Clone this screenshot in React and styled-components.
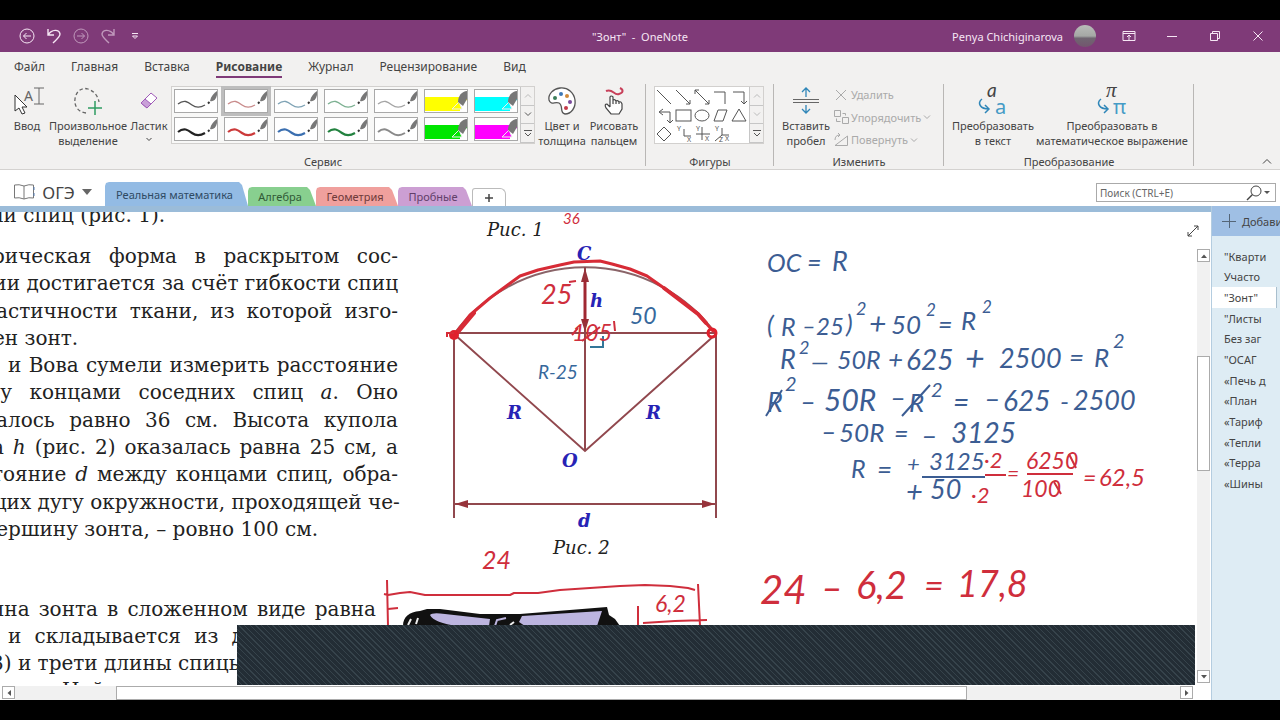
import React, { useState } from "react";
import styled, { createGlobalStyle, css } from "styled-components";

const ui = '"Noto Sans", "Open Sans", sans-serif';
const serif = '"DejaVu Serif", "Liberation Serif", serif';

const GlobalStyle = createGlobalStyle`
  * { box-sizing: border-box; }
  body { margin: 0; background: #000; font-family: ${ui}; font-size: 12px; color: #444; }
  button, input { font: inherit; color: inherit; }
`;

// shell
const Screen = styled.div`
  display: flex;
  flex-direction: column;
  height: 100vh;
  padding: 20px 0;
  background: #000;
  overflow: hidden;
`;
const PlainButton = styled.button`
  display: flex;
  align-items: center;
  justify-content: center;
  padding: 0;
  border: 0;
  background: none;
  cursor: pointer;
`;

// title bar
const TitleBar = styled.header`
  display: grid;
  flex: none;
  grid-template-columns: 1fr auto 1fr;
  align-items: center;
  height: 32px;
  background: #7f3a78;
  color: #f6e6f4;
  font-size: 11px;
`;
const QuickAccess = styled.div`
  display: flex;
  gap: 7px;
  padding-left: 17px;
`;
const QuickButton = styled(PlainButton)`
  width: 20px;
  height: 20px;
  opacity: ${({ $dim }) => ($dim ? 0.55 : 1)};
`;
const WindowTitle = styled.h1`
  margin: 0;
  font-size: 11px;
  font-weight: 400;
  white-space: pre;
`;
const WindowTools = styled.div`
  display: flex;
  align-items: center;
  justify-content: flex-end;
  padding-right: 10px;
`;
const UserName = styled.span`
  margin-right: 11px;
`;
const Avatar = styled.span`
  width: 22px;
  height: 22px;
  margin-right: 21px;
  border-radius: 50%;
  background: linear-gradient(#b9bcb9 0%, #a5a8a5 50%, #6f6671 60%, #74556f 100%);
`;
const WindowButton = styled(PlainButton)`
  width: 24px;
  height: 24px;
  margin-left: ${({ $first }) => ($first ? "0" : "19px")};
`;

// ribbon
const Ribbon = styled.section`
  flex: none;
  height: 118px;
  background: #f2f1f0;
  border-bottom: 1px solid #d4d2d0;
`;
const RibbonTabs = styled.nav`
  display: flex;
  gap: 26px;
  height: 32px;
  padding: 4px 14px 0;
`;
const RibbonTab = styled(PlainButton)`
  height: 20px;
  ${({ $active }) =>
    $active &&
    css`
      font-weight: 700;
      box-shadow: 0 2px 0 #7f3a78;
    `}
`;
const Groups = styled.div`
  display: flex;
  height: 84px;
`;
const Group = styled.div`
  display: flex;
  flex-direction: column;
  justify-content: space-between;
  flex: 0 0 ${({ $width }) => $width}px;
  min-width: 0;
  background: linear-gradient(#b9b7b5, #b9b7b5) right top / 1px 82px no-repeat;
`;
const GroupItems = styled.div`
  display: flex;
  gap: 2px;
  padding: 2px 0 0 ${({ $start = 8 }) => $start}px;
`;
const GroupLabel = styled.span`
  line-height: 13px;
  font-size: 11px;
  text-align: center;
`;
const ToolButton = styled(PlainButton)`
  flex: 0 0 ${({ $width }) => $width}px;
  flex-direction: column;
  justify-content: flex-start;
  line-height: 15px;
  font-size: 11px;
  white-space: nowrap;
  svg { margin-bottom: 2px; }
`;
const Gallery = styled.div`
  display: flex;
  height: 58px;
  border: 1px solid #d2d0ce;
  background: #fff;
`;
const PenGrid = styled.div`
  display: grid;
  grid-template-columns: repeat(7, 44px);
  gap: 4px 6px;
  padding: 2px;
  background: #f8f8f7;
`;
const PenCell = styled(PlainButton)`
  height: 24px;
  border: 1px solid #a9a9a9;
  background: #fff;
  outline: ${({ $active }) => ($active ? "3px solid #bdbdbd" : "none")};
`;
const GalleryScroll = styled.div`
  display: grid;
  grid-template-rows: repeat(3, 1fr);
  width: 14px;
  border-left: 1px solid #c6c6c6;
`;
const ScrollStep = styled(PlainButton)`
  background: #f2f1f0;
  border-bottom: 1px solid #c6c6c6;
  color: ${({ $dim }) => ($dim ? "#bbb" : "#555")};
`;
const EditList = styled.div`
  display: flex;
  flex-direction: column;
  justify-content: space-between;
  height: 62px;
  color: #aaa;
`;
const EditButton = styled(PlainButton)`
  gap: 2px;
  justify-content: flex-start;
  height: 17px;
  font-size: 11px;
  white-space: nowrap;
`;
const Collapse = styled(PlainButton)`
  align-self: flex-end;
  width: 20px;
  height: 14px;
  margin: 0 3px 0 auto;
`;

// notebook bar
const NotebookBar = styled.div`
  display: flex;
  flex: none;
  align-items: flex-end;
  height: 36px;
  background: #fff;
`;
const Notebook = styled(PlainButton)`
  gap: 7px;
  width: 105px;
  height: 28px;
  font-size: 17px;
`;
const SectionTab = styled(PlainButton)`
  width: ${({ $width }) => $width}px;
  height: ${({ $active }) => ($active ? 24 : 19)}px;
  padding-right: 4px;
  background: ${({ $color }) => $color};
  color: ${({ $ink }) => $ink};
  font-size: 11px;
  clip-path: polygon(0 4px, 1px 1px, 4px 0, calc(100% - 9px) 0, calc(100% - 6px) 3px, 100% 100%, 0 100%);
`;
const NewSection = styled(PlainButton)`
  width: 34px;
  height: 18px;
  border: 1px solid #bbb;
  border-bottom: 0;
  border-radius: 3px 6px 0 0;
`;
const SearchBox = styled.label`
  display: flex;
  align-items: center;
  width: 180px;
  height: 19px;
  margin: 0 4px 4px auto;
  padding: 0 4px 0 3px;
  border: 1px solid #aaa;
  input {
    flex: 1;
    min-width: 0;
    padding: 0;
    border: 0;
    outline: 0;
    font-size: 10px;
  }
  input::placeholder { color: #666; opacity: 1; }
`;

// work area
const Work = styled.main`
  display: flex;
  flex: 1;
  min-height: 0;
  background: #fff;
`;
const Editor = styled.div`
  display: flex;
  flex-direction: column;
  flex: 1;
  min-width: 0;
  border-top: 6px solid #9bbcd9;
`;
const EditorRow = styled.div`
  display: flex;
  flex: 1;
  min-height: 0;
`;
const Canvas = styled.article`
  position: relative;
  flex: 1;
  min-width: 0;
  overflow: hidden;
  color: #222;
`;
const Ink = styled.svg`
  position: absolute;
  left: 0;
  top: 0;
`;
const Passage = styled.div`
  display: flex;
  flex-direction: column;
  justify-content: space-between;
  width: 398px;
  height: ${({ $height }) => $height}px;
  margin-top: ${({ $top }) => $top}px;
  font-family: ${serif};
  font-size: 20px;
  line-height: 27px;
`;
const Line = styled.p`
  margin: 0 ${({ $right = 0 }) => $right}px 0 ${({ $left = 0 }) => $left}px;
  white-space: nowrap;
  text-align-last: ${({ $loose }) => ($loose ? "left" : "justify")};
`;
const Cover = styled.div`
  position: absolute;
  left: 237px;
  right: 1px;
  bottom: 0;
  height: 60px;
  background: repeating-linear-gradient(45deg, #232d35 0 3px, #36434b 3px 4px);
`;

const VScroll = styled.div`
  display: flex;
  flex-direction: column;
  align-items: center;
  width: 15px;
  padding-bottom: 2px;
`;
const Expand = styled(PlainButton)`
  position: relative;
  width: 16px;
  height: 37px;
  margin-right: 22px;
`;
const Track = styled.div`
  display: flex;
  flex: 1;
  background: #f1f1f1;
  ${({ $vertical }) =>
    $vertical ? "flex-direction: column; width: 13px; padding-top: 94px;" : "height: 14px; padding-left: 101px;"}
`;
const Thumb = styled.div`
  flex: 0 0 ${({ $size }) => $size};
  border: 1px solid #ababab;
  background: #fff;
`;
const ArrowButton = styled(PlainButton)`
  width: 13px;
  height: 13px;
  border: 1px solid #ababab;
  background: #fff;
`;
const HScroll = styled.div`
  display: flex;
  align-items: center;
  height: 15px;
  padding: 0 18px 0 2px;
`;

// page list
const Pages = styled.aside`
  width: 69px;
  overflow: hidden;
  background: #deecf4;
  border-left: 1px solid #b4cde0;
`;
const AddPage = styled(PlainButton)`
  justify-content: flex-start;
  gap: 6px;
  width: 100%;
  height: 30px;
  padding-left: 10px;
  background: #9fbfe4;
  font-size: 11px;
  white-space: nowrap;
  svg { flex: none; }
`;
const PageList = styled.div`
  display: grid;
  grid-template-rows: repeat(12, 1fr);
  height: 248px;
  margin-top: 10px;
`;
const PageItem = styled(PlainButton)`
  justify-content: flex-start;
  margin-right: 4px;
  padding-left: 12px;
  font-size: 11px;
  white-space: nowrap;
  ${({ $active }) => $active && "background: #fff; box-shadow: 1px 0 0 #a9bfce;"}
`;

function Icon({ w = 16, h = 16, children, ...rest }) {
  return (
    <svg width={w} height={h} viewBox={`0 0 ${w} ${h}`} fill="none" stroke="currentColor" overflow="visible" aria-hidden="true" {...rest}>
      {children}
    </svg>
  );
}

const Chevron = ({ up }) => (
  <Icon w={8} h={6}><path d={up ? "M1 4.5 4 1.5 7 4.5" : "M1 1.5 4 4.5 7 1.5"} /></Icon>
);
const More = () => (
  <Icon w={8} h={8}><path d="M0 1.5H8M1 4 4 7 7 4" /></Icon>
);
const Triangle = ({ turn = 0 }) => (
  <Icon w={8} h={8} stroke="none">
    <path d="M1 6 4 2.500 7 6Z" fill="#555" transform={`rotate(${turn} 4 4)`} />
  </Icon>
);

function PenIcon({ color, width }) {
  return (
    <Icon w={42} h={22}>
      <path d="M3 14C9 9 13 12 17 15S25 18 30 15" stroke={color} strokeWidth={width} />
      <path d="M33 13.500 34.500 12" stroke="#333" strokeWidth="2" />
      <path d="M35 11C36 6 39 3 42 1V5C41 10 38 12 35 11Z" fill="#777" stroke="none" />
    </Icon>
  );
}

function MarkerIcon({ color }) {
  return (
    <Icon w={42} h={22}>
      <path d="M0 7H42V21H0Z" fill={color} stroke="none" />
      <path d="M35 13 42 10V21H35Z" fill="#fff" stroke="none" />
      <path d="M27 19 34 12 37 19Z" stroke="#eee" fill={color} />
      <path d="M33 12C33 6 37 1 42 1V9L38 16Z" fill="#777" stroke="none" />
    </Icon>
  );
}

const pens = [
  ["#555", 1.3], ["#c98c8c", 1.3], ["#7fa3b5", 1.3], ["#7db192", 1.3], ["#a5a5a5", 1.3], "#ffff00", "#00ffff",
  ["#222", 2.2], ["#cc3a3a", 2.2], ["#3b6fb0", 2.2], ["#22823f", 2.2], ["#8a8a8a", 2], "#00e600", "#ff00ff",
];

const sections = [
  ["Реальная математика", 143, "#93bbe4", "#2f4a63"],
  ["Алгебра", 68, "#88cf8f", "#315a36"],
  ["Геометрия", 82, "#f0a09d", "#6e3a3a"],
  ["Пробные", 74, "#cc9fd3", "#62406a"],
];

const pages = [
  '"Кварти', "Участо", '"Зонт"', '"Листы', "Без заг", '"ОСАГ',
  "«Печь д", "«План", "«Тариф", "«Тепли", "«Терра", "«Шины",
];

const BLUE = "#3c5d93";
const RED = "#cf2e3c";

// handwriting on the canvas: text, x, baseline, size, colour
const notes = [
  ["OC", 767, 272, 25, BLUE], ["=", 807, 272, 25, BLUE], ["R", 832, 271, 27, BLUE],
  ["(", 767, 334, 26, BLUE], ["R", 781, 336, 25, BLUE], ["–", 802, 334, 24, BLUE], ["25", 816, 335, 24, BLUE],
  [")", 846, 333, 26, BLUE], ["2", 856, 315, 18, BLUE], ["+", 869, 334, 30, BLUE], ["50", 891, 334, 26, BLUE],
  ["2", 926, 316, 17, BLUE], ["=", 938, 334, 25, BLUE], ["R", 961, 330, 26, BLUE], ["2", 982, 313, 17, BLUE],
  ["R", 780, 369, 27, BLUE], ["2", 799, 354, 18, BLUE], ["—", 811, 370, 24, BLUE], ["50R", 837, 369, 25, BLUE],
  ["+", 888, 369, 26, BLUE], ["625", 906, 370, 28, BLUE], ["+", 965, 371, 34, BLUE], ["2500", 999, 368, 27, BLUE],
  ["=", 1069, 367, 26, BLUE], ["R", 1094, 367, 26, BLUE], ["2", 1113, 348, 20, BLUE],
  ["R", 767, 412, 27, BLUE], ["2", 785, 391, 20, BLUE], ["–", 800, 412, 28, BLUE], ["50R", 824, 411, 30, BLUE],
  ["–", 890, 408, 28, BLUE], ["R", 909, 412, 26, BLUE], ["2", 931, 397, 20, BLUE], ["=", 953, 412, 28, BLUE],
  ["–", 984, 409, 29, BLUE], ["625", 1003, 411, 28, BLUE], ["-", 1060, 411, 26, BLUE], ["2500", 1073, 410, 27, BLUE],
  ["–", 821, 441, 27, BLUE], ["50R", 839, 442, 26, BLUE], ["=", 894, 443, 25, BLUE], ["–", 921, 446, 29, BLUE],
  ["3125", 951, 443, 28, BLUE],
  ["R", 851, 478, 25, BLUE], ["=", 877, 479, 26, BLUE], ["+", 907, 472, 22, BLUE], ["3125", 929, 470, 24, BLUE],
  ["+", 906, 502, 29, BLUE], ["50", 930, 499, 27, BLUE],
  ["·2", 984, 468, 22, RED], ["=", 1007, 481, 21, RED], ["6250", 1026, 469, 23, RED], ["·2", 971, 503, 22, RED],
  ["100", 1021, 497, 23, RED], ["=", 1083, 486, 23, RED], ["62,5", 1099, 486, 24, RED],
  ["24", 760, 604, 40, RED], ["–", 821, 601, 38, RED], ["6,2", 856, 599, 38, RED], ["=", 924, 598, 34, RED],
  ["17,8", 957, 597, 36, RED],
  ["36", 563, 224, 15, RED], ["25", 541, 304, 27, RED], ["50", 630, 324, 23, "#36689c"], ["R-25", 538, 379, 19, "#36689c"],
  ["105", 572, 341, 23, RED], ["24", 482, 569, 25, RED], ["6,2", 655, 612, 23, RED],
];

// printed labels of the figure
const labels = [
  ["C", 577, 260], ["h", 590, 307], ["R", 507, 419], ["R", 646, 419], ["O", 562, 467], ["d", 578, 527],
];

function Drawing() {
  return (
    <Ink width="1195" height="473" viewBox="0 212 1195 473" fill="none">
      {/* umbrella dome */}
      <g stroke="#91484e" strokeWidth="2">
        <path d="M454 334A162 162 0 0 1 716 334" stroke="#8a6468" />
        <path d="M454 333H716M585 267V451M454 334 585 451 716 334M454 334V518M716 334V518M454 504H716" />
      </g>
      <path d="M585 268 581 282H589ZM585 332 581 319H589ZM455 504 468 500V508ZM715 504 702 500V508Z" fill="#97333a" />
      <path d="M585 280V322" stroke="#a02832" strokeWidth="3" />
      <g stroke="#d72b36" strokeWidth="2" strokeLinecap="round" strokeLinejoin="round">
        <path d="M455 334 470 315 490 298 509 284 520 276 538 270 560 265 574 262 600 261 612 264 630 269 647 276 664 288 682 301 698 314 713 331" strokeWidth="3" />
        <path d="M458 332 474 313M664 288 698 314 706 323" strokeWidth="4" />
      </g>
      <circle cx="454" cy="335" r="5" fill="#e0202c" />
      <path d="M447 337V333H454" stroke="#d72b36" strokeWidth="2" />
      <circle cx="712" cy="333" r="4" stroke="#e0202c" strokeWidth="3" />
      <path d="M590 347H603V336" stroke="#337799" strokeWidth="2" />
      <path d="M569 282 576 281M614 321 615 331M572 335 578 328M582 341 600 327" stroke={RED} strokeWidth="2" />

      {/* folded umbrella */}
      <path d="M403 626C403 617 409 612 420 611L427 609 440 609 480 614H520L607 607 609 615 615 619 620 626Z" fill="#111" />
      <path d="M430 615Q432 612 445 614L490 619 489 626H458Q434 623 430 615ZM522 616 602 611 597 626H525L519 622Z" fill="#bcb4df" />
      <path d="M408 625 411 619M416 624 418 618M510 625 514 622" stroke="#eee" strokeWidth="2" />
      <path d="M495 626 497 620 506 618" stroke="#bcb4df" strokeWidth="2" />

      {/* dimension strokes */}
      <g stroke={RED} strokeWidth="2" strokeLinejoin="round">
        <path d="M387 580 388 626M384 594 388 595 400 593 410 592 425 595H510L514 593 538 593 560 590 590 588 620 586 645 585 670 586 688 588 695 590" />
        <path d="M388 609 398 608M698 584 700 626M638 606V626M643 623 675 621 707 620" />
        <path d="M985 475H1006M1027 474H1073" />
        <path d="M1069 454 1076 468M1054 482 1061 494" />
      </g>
      <g stroke={BLUE} strokeWidth="2">
        <path d="M922 477H985M766 416 782 390M902 416 930 385" />
      </g>

      <g fontFamily="Lato, sans-serif" fontStyle="italic">
        {notes.map(([text, x, y, size, color], i) => (
          <text key={i} x={x} y={y} fontSize={size} fill={color}>{text}</text>
        ))}
      </g>
      <g fontFamily={serif} fontStyle="italic">
        {labels.map(([text, x, y], i) => (
          <text key={i} x={x} y={y} fontSize="18" fontWeight="700" fill="#2723b5">{text}</text>
        ))}
        <text x="487" y="236" fontSize="18" fill="#222">Рис. 1</text>
        <text x="553" y="554" fontSize="18" fill="#222">Рис. 2</text>
      </g>
    </Ink>
  );
}

function ShapesIcon() {
  return (
    <Icon w={94} h={56} stroke="#555">
      <path d="M2 3 16 17M21 3 35 17M40 3 54 17M59 5H70V17M78 5H89V17M5 25H15V36" />
      <path d="M31 17H35V13M40 7V3H44M50 17H54V13M86 14 89 17 92 14M8 22 4 25 8 28M12 33 15 36 18 33" />
      <rect x="21" y="23" width="15" height="11" />
      <ellipse cx="47" cy="28.500" rx="7" ry="5.500" />
      <path d="M63 23H72L68 34H59ZM84 22 91 34H77ZM9 40 16 47 9 54 2 47Z" />
      <path d="M29 42V49H36M47 40V53M41 47H55M67 41V48H74M67 48 60 54" />
      <g fill="#555" stroke="none" fontSize="7" fontFamily="Noto Sans">
        <text x="22" y="44">Y</text><text x="32" y="55">X</text>
        <text x="41" y="44">Y</text><text x="50" y="54">X</text>
        <text x="60" y="44">Y</text><text x="64" y="55">Z</text><text x="70" y="54">X</text>
      </g>
    </Icon>
  );
}

function RibbonGroups() {
  const [pen, setPen] = useState(1);
  return (
    <Groups>
      <Group $width={646}>
        <GroupItems $start={7}>
          <ToolButton $width={40}>
            <Icon w={34} h={30} stroke="#666">
              <path d="M24 2H34M29 2V18M24 18H34" />
              <text x="14" y="15" fontSize="14" fill="#666" stroke="none">A</text>
              <path d="M5 9V25L9 22 12 28 15 27 12 21H17Z" fill="#fff" stroke="#333" />
            </Icon>
            Ввод
          </ToolButton>
          <ToolButton $width={76}>
            <Icon w={32} h={30}>
              <path d="M14 27C6 26 2 20 3 13 4 5 10 1 16 3 22 5 26 10 27 16" stroke="#666" strokeWidth="1.300" strokeDasharray="3.500 2.500" />
              <path d="M23 15V29M16 22H30" stroke="#2f9c61" strokeWidth="1.500" />
            </Icon>
            Произвольное<br />выделение
          </ToolButton>
          <ToolButton $width={40}>
            <Icon w={24} h={30} stroke="#a05cb8">
              <path d="M4 17 14 7 20 12 10 22Z" fill="#fff" />
              <path d="M4 17 8 13 14 18 10 22Z" fill="#c9a0d8" />
            </Icon>
            Ластик
            <Icon w={8} h={12}><path d="M1.500 5 4 7.500 6.500 5" /></Icon>
          </ToolButton>
          <Gallery>
            <PenGrid>
              {pens.map((p, i) => (
                <PenCell key={i} $active={pen === i} onClick={() => setPen(i)} aria-label={`Перо ${i + 1}`}>
                  {typeof p === "string" ? <MarkerIcon color={p} /> : <PenIcon color={p[0]} width={p[1]} />}
                </PenCell>
              ))}
            </PenGrid>
            <GalleryScroll>
              <ScrollStep $dim aria-label="Вверх"><Chevron up /></ScrollStep>
              <ScrollStep aria-label="Вниз"><Chevron /></ScrollStep>
              <ScrollStep aria-label="Ещё"><More /></ScrollStep>
            </GalleryScroll>
          </Gallery>
          <ToolButton $width={50}>
            <Icon w={30} h={30}>
              <path d="M13 2C21 1 27 7 28 14 29 22 24 28 18 28 12 27 17 20 12 17 8 15 4 20 2 14 1 8 6 3 13 2Z" fill="#fff" stroke="#555" strokeWidth="1.300" />
              <g stroke="none">
                <circle cx="8" cy="12" r="2" fill="#3b7d5a" /><circle cx="14" cy="8" r="2" fill="#3d78b5" />
                <circle cx="20" cy="10" r="2" fill="#d08a3a" /><circle cx="23" cy="16" r="2" fill="#7a4a9b" />
                <circle cx="19" cy="22" r="2" fill="#c43a4a" />
              </g>
            </Icon>
            Цвет и<br />толщина
          </ToolButton>
          <ToolButton $width={50}>
            <Icon w={30} h={30} stroke="#444">
              <path d="M7 5C14 2 15 10 20 8 24 7 25 4 21 2" stroke="#c8405a" strokeWidth="2" />
              <path d="M11 21V11Q12 9 14 11V18M14 17V14Q16 13 17 15V18M17 15Q19 14 20 16V18M20 16Q22 15 23 18V23L20 28H12L7 22Q5 18 8 18L11 21" fill="#fff" strokeWidth="1.200" />
            </Icon>
            Рисовать<br />пальцем
          </ToolButton>
        </GroupItems>
        <GroupLabel>Сервис</GroupLabel>
      </Group>

      <Group $width={128}>
        <GroupItems>
          <Gallery>
            <ShapesIcon />
            <GalleryScroll>
              <ScrollStep $dim aria-label="Вверх"><Chevron up /></ScrollStep>
              <ScrollStep $dim aria-label="Вниз"><Chevron /></ScrollStep>
              <ScrollStep aria-label="Ещё"><More /></ScrollStep>
            </GalleryScroll>
          </Gallery>
        </GroupItems>
        <GroupLabel>Фигуры</GroupLabel>
      </Group>

      <Group $width={170}>
        <GroupItems $start={7}>
          <ToolButton $width={50}>
            <Icon w={30} h={30}>
              <path d="M2 13.500H28M2 16.500H28" stroke="#666" />
              <path d="M15 11V2M11 6 15 2 19 6M15 19V27M11 23 15 27 19 23" stroke="#2f86b8" strokeWidth="1.300" />
            </Icon>
            Вставить<br />пробел
          </ToolButton>
          <EditList>
            <EditButton><Icon h={14}><path d="M3 2 13 12M13 2 3 12" /></Icon>Удалить</EditButton>
            <EditButton>
              <Icon><path d="M1.500 1.500H7.500V7.500H1.500ZM9.500 8.500H15.500V14.500H9.500ZM9.500 4.500H12.500V6.500M3.500 9.500V12.500H7.500" /></Icon>
              Упорядочить <Chevron />
            </EditButton>
            <EditButton>
              <Icon><path d="M2 13.500 14.500 4V13.500ZM2 8Q2 3 7 3M5 1 7 3 5 5" /></Icon>
              Повернуть <Chevron />
            </EditButton>
          </EditList>
        </GroupItems>
        <GroupLabel>Изменить</GroupLabel>
      </Group>

      <Group $width={250}>
        <GroupItems>
          <ToolButton $width={80}>
            <Icon w={32} h={30} stroke="#2f86b8">
              <path d="M5 13C0 17 3 23 12 23M8 19 12 23 8 27" strokeWidth="1.500" />
              <text x="10" y="11" fontSize="19" fontStyle="italic" fontFamily="Lato" fill="#444" stroke="none">a</text>
              <text x="18" y="28" fontSize="20" fontFamily="Noto Sans" fill="#459bc6" stroke="none">a</text>
            </Icon>
            Преобразовать<br />в текст
          </ToolButton>
          <ToolButton $width={150}>
            <Icon w={32} h={30} stroke="#2f86b8">
              <path d="M5 13C0 17 3 23 12 23M8 19 12 23 8 27" strokeWidth="1.500" />
              <text x="10" y="11" fontSize="21" fontStyle="italic" fontFamily="Liberation Serif" fill="#444" stroke="none">π</text>
              <text x="17" y="28" fontSize="20" fontFamily="Noto Sans" fill="#459bc6" stroke="none">π</text>
            </Icon>
            Преобразовать в<br />математическое выражение
          </ToolButton>
        </GroupItems>
        <GroupLabel>Преобразование</GroupLabel>
      </Group>
      <Collapse aria-label="Свернуть ленту"><Icon w={12} h={8}><path d="M2 6.500 6 2.500 10 6.500" /></Icon></Collapse>
    </Groups>
  );
}

function App() {
  const [page, setPage] = useState(2);
  const tabs = ["Файл", "Главная", "Вставка", "Рисование", "Журнал", "Рецензирование", "Вид"];

  return (
    <Screen>
      <GlobalStyle />
      <TitleBar>
        <QuickAccess>
          <QuickButton aria-label="Назад">
            <Icon><circle cx="8" cy="8" r="7" /><path d="M12 8H4.500M7.500 5 4.500 8 7.500 11" /></Icon>
          </QuickButton>
          <QuickButton aria-label="Отменить">
            <Icon strokeWidth="1.400"><path d="M2 1V7H8M2 7C6 1 13 1 14 6 14 9 10 12 7 15" /></Icon>
          </QuickButton>
          <QuickButton $dim aria-label="Вперёд">
            <Icon><circle cx="8" cy="8" r="7" /><path d="M4 8H11.500M8.500 5 11.500 8 8.500 11" /></Icon>
          </QuickButton>
          <QuickButton $dim aria-label="Вернуть">
            <Icon strokeWidth="1.400"><path d="M14 1V7H8M14 7C10 1 3 1 2 6 2 9 6 12 9 15" /></Icon>
          </QuickButton>
          <QuickButton aria-label="Настройка панели">
            <Icon w={8} h={8}><path d="M1 1.500H7M1.500 4 4 6.500 6.500 4Z" /></Icon>
          </QuickButton>
        </QuickAccess>
        <WindowTitle>{'"Зонт"  -  OneNote'}</WindowTitle>
        <WindowTools>
          <UserName>Penya Chichiginarova</UserName>
          <Avatar />
          <WindowButton $first aria-label="Параметры ленты">
            <Icon w={14} h={12}><path d="M1 1.500H13V10.500H1ZM1 3.500H13M7 10V5.500M5 7 7 5 9 7" /></Icon>
          </WindowButton>
          <WindowButton aria-label="Свернуть"><Icon w={10} h={10}><path d="M0 5.500H10" /></Icon></WindowButton>
          <WindowButton aria-label="Окно"><Icon w={10} h={10}><path d="M.5 2.500H7.500V9.500H.5ZM2.500 2.500V.5H9.500V7.500H7.500" /></Icon></WindowButton>
          <WindowButton aria-label="Закрыть"><Icon w={10} h={10}><path d="M.5 .5 9.500 9.500M9.500 .5 .5 9.500" /></Icon></WindowButton>
        </WindowTools>
      </TitleBar>

      <Ribbon>
        <RibbonTabs>
          {tabs.map((t) => <RibbonTab key={t} $active={t === "Рисование"}>{t}</RibbonTab>)}
        </RibbonTabs>
        <RibbonGroups />
      </Ribbon>

      <NotebookBar>
        <Notebook>
          <Icon w={22} h={18} stroke="#777">
            <path d="M11 3Q6 1 1.500 2V15Q6 14 11 16 16 14 20.500 15V2Q16 1 11 3V16" />
            <path d="M21 4V7M21 10V13" stroke="#567fb5" />
          </Icon>
          ОГЭ
          <Icon w={10} h={6} stroke="none"><path d="M0 0H10L5 6Z" fill="#666" /></Icon>
        </Notebook>
        {sections.map(([name, width, color, ink], i) => (
          <SectionTab key={name} $width={width} $color={color} $ink={ink} $active={i === 0}>{name}</SectionTab>
        ))}
        <NewSection aria-label="Новый раздел"><Icon w={8} h={8} strokeWidth="1.500"><path d="M4 0V8M0 4H8" /></Icon></NewSection>
        <SearchBox>
          <input type="text" placeholder="Поиск (CTRL+E)" aria-label="Поиск" />
          <Icon w={26} h={16}>
            <circle cx="11" cy="6" r="5" /><path d="M7.500 9.500 2 15" strokeWidth="1.500" />
            <path d="M19 6H25L22 9Z" fill="#555" stroke="none" />
          </Icon>
        </SearchBox>
      </NotebookBar>

      <Work>
        <Editor>
          <EditorRow>
            <Canvas>
              <Passage $height={27} $top={-10}>
                <Line $left={-12} $loose>ми спиц (рис. 1).</Line>
              </Passage>
              <Passage $height={300} $top={14}>
                <Line $left={-8}>рическая форма в раскрытом сос-</Line>
                <Line $left={-20}>нии достигается за счёт гибкости спиц</Line>
                <Line $left={-4}>астичности ткани, из которой изго-</Line>
                <Line $left={-7} $loose>ен зонт.</Line>
                <Line $left={8}>и Вова сумели измерить расстояние</Line>
                <Line $left={-12}>ду концами соседних спиц <i>a</i>. Оно</Line>
                <Line $left={-4}>алось равно 36 см. Высота купола</Line>
                <Line $left={-8}>а <i>h</i> (рис. 2) оказалась равна 25 см, а</Line>
                <Line $left={-8}>тояние <i>d</i> между концами спиц, обра-</Line>
                <Line $left={-12}>щих дугу окружности, проходящей че-</Line>
                <Line $left={-15} $loose>вершину зонта, – ровно 100 см.</Line>
              </Passage>
              <Passage $height={108} $top={53}>
                <Line $left={-9} $right={22}>ина зонта в сложенном виде равна</Line>
                <Line $left={8} $right={22}>и складывается из длины ручки</Line>
                <Line $left={-9} $loose>3) и трети длины спицы</Line>
                <Line $left={62} $loose>Найдите</Line>
              </Passage>
              <Drawing />
              <Cover />
            </Canvas>
            <VScroll>
              <Expand aria-label="Развернуть">
                <Icon w={12} h={12}><path d="M1 11 11 1M7 1H11V5M1 7V11H5" /></Icon>
              </Expand>
              <ArrowButton aria-label="Прокрутить вверх"><Triangle /></ArrowButton>
              <Track $vertical><Thumb $size="115px" /></Track>
              <ArrowButton aria-label="Прокрутить вниз"><Triangle turn={180} /></ArrowButton>
            </VScroll>
          </EditorRow>
          <HScroll>
            <ArrowButton aria-label="Прокрутить влево"><Triangle turn={-90} /></ArrowButton>
            <Track><Thumb $size="80%" /></Track>
            <ArrowButton aria-label="Прокрутить вправо"><Triangle turn={90} /></ArrowButton>
          </HScroll>
        </Editor>
        <Pages>
          <AddPage>
            <Icon w={14} h={14} stroke="#567"><path d="M7.500 0V14M0 7.500H14" /></Icon>
            Добавить страницу
          </AddPage>
          <PageList>
            {pages.map((name, i) => (
              <PageItem key={name} $active={page === i} onClick={() => setPage(i)}>{name}</PageItem>
            ))}
          </PageList>
        </Pages>
      </Work>
    </Screen>
  );
}

export default App;
